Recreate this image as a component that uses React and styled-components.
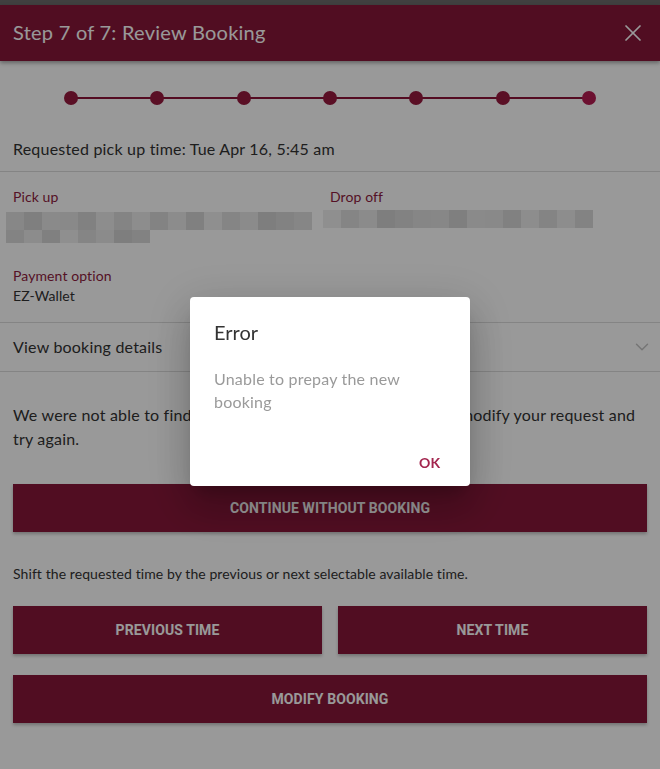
import React from "react";
import styled, { createGlobalStyle } from "styled-components";
import { X, ChevronDown } from "lucide-react";

const GlobalStyle = createGlobalStyle`
  html, body { margin: 0; padding: 0; background: #fff; }
  body { font-family: "Lato", "Open Sans", sans-serif; color: #333; }
  * { box-sizing: border-box; }
`;

const MAROON = "#871739";

const Page = styled.div`
  width: 660px;
  min-height: 769px;
  background: #fff;
  position: relative;
`;

const TopStrip = styled.div`
  height: 5px;
  background: #6b6b6b;
`;

const Header = styled.header`
  height: 56px;
  background: ${MAROON};
  display: flex;
  align-items: center;
  justify-content: space-between;
  padding: 0 13px;
  box-shadow: 0 2px 4px rgba(0, 0, 0, 0.35);
  color: #fff;
`;

const Title = styled.h1`
  margin: 0 0 2px;
  font-size: 20px;
  font-weight: 400;
  letter-spacing: 0.25px;
`;

const CloseBtn = styled.span`
  display: flex;
  color: #fff;
`;

const Stepper = styled.div`
  margin: 30px 64px 0;
  display: flex;
  justify-content: space-between;
  align-items: center;
  position: relative;
  &::before {
    content: "";
    position: absolute;
    left: 7px;
    right: 7px;
    top: 6px;
    height: 2px;
    background: #8d143a;
  }
`;

const Dot = styled.span`
  width: 14px;
  height: 14px;
  border-radius: 50%;
  background: ${(p) => (p.$active ? "#b41c50" : "#96193e")};
  position: relative;
`;

const Section = styled.div`
  padding: ${(p) => p.$pad || "0 13px"};
  border-bottom: ${(p) => (p.$divider ? "1px solid #dcdcdc" : "none")};
`;

const BodyText = styled.p`
  margin: 0;
  font-size: 16px;
  line-height: 24px;
  letter-spacing: 0.2px;
  color: #333;
`;

const Columns = styled.div`
  display: grid;
  grid-template-columns: 317px 317px;
`;

const Label = styled.div`
  font-size: 14px;
  line-height: 20px;
  letter-spacing: 0.1px;
  color: #8e1b40;
`;

const Value = styled.div`
  font-size: 14px;
  line-height: 20px;
  letter-spacing: 0.1px;
  color: #333;
`;

const Payment = styled.div`
  margin-top: 23px;
`;

const Mosaic = styled.div`
  margin-left: -7px;
  margin-top: ${(p) => p.$mt || "5px"};
  display: flex;
  flex-direction: column;
`;

const MosaicRow = styled.div`
  display: flex;
  height: ${(p) => p.$h}px;
`;

const Cell = styled.span`
  width: 18px;
  height: 100%;
  flex: none;
`;

const DetailsRow = styled.div`
  display: flex;
  align-items: center;
  justify-content: space-between;
  height: 49px;
  padding: 0 13px;
  border-bottom: 1px solid #dcdcdc;
`;

const Chevron = styled.span`
  display: flex;
  color: #c4c4c4;
  margin-right: -6px;
`;

const Button = styled.button`
  display: flex;
  align-items: center;
  justify-content: center;
  height: 48px;
  width: 100%;
  border: none;
  border-radius: 0;
  background: ${MAROON};
  color: #fff;
  font-family: "Roboto", sans-serif;
  font-weight: 700;
  font-size: 14px;
  letter-spacing: 0.1px;
  text-transform: uppercase;
  box-shadow: 0 2px 3px rgba(0, 0, 0, 0.25);
  cursor: pointer;
`;

const Actions = styled.div`
  padding: ${(p) => p.$pad || "0 13px"};
  display: grid;
  grid-template-columns: ${(p) => (p.$split ? "1fr 1fr" : "1fr")};
  gap: 16px;
`;

const SmallText = styled.p`
  margin: 0;
  padding: 32px 13px 0;
  font-size: 14px;
  line-height: 20px;
  color: #333;
  letter-spacing: 0.08px;
`;

const Overlay = styled.div`
  position: fixed;
  inset: 0;
  background: rgba(0, 0, 0, 0.4);
  display: flex;
  align-items: center;
  justify-content: center;
  padding-top: 14px;
`;

const Dialog = styled.div`
  width: 280px;
  background: #fff;
  border-radius: 4px;
  box-shadow: 0 11px 15px -7px rgba(0, 0, 0, 0.2), 0 24px 38px 3px rgba(0, 0, 0, 0.14),
    0 9px 46px 8px rgba(0, 0, 0, 0.12);
  display: flex;
  flex-direction: column;
`;

const DialogTitle = styled.h2`
  margin: 0;
  padding: 23px 24px 0;
  font-size: 20px;
  line-height: 24px;
  font-weight: 400;
  color: #333;
`;

const DialogBody = styled.p`
  margin: 0;
  padding: 23px 24px 0;
  font-size: 16px;
  line-height: 23px;
  letter-spacing: 0.2px;
  color: #9a9a9a;
`;

const DialogActions = styled.div`
  display: flex;
  justify-content: flex-end;
  padding: 31px 14px 6px;
`;

const TextButton = styled.button`
  height: 36px;
  padding: 0 16px;
  border: none;
  background: transparent;
  color: #a3264f;
  font-family: "Lato", sans-serif;
  font-weight: 700;
  font-size: 14px;
  text-transform: uppercase;
  cursor: pointer;
`;

const shades = [
  "#e6e6e6", "#ececec", "#dedede", "#e2e2e2", "#ebebeb", "#d6d6d6", "#d9d9d9",
  "#e4e4e4", "#dadada", "#e8e8e8", "#d4d4d4", "#dcdcdc", "#efefef", "#e0e0e0",
  "#d8d8d8", "#e9e9e9", "#d3d3d3",
];

function Blur({ rows, mt, seed = 0 }) {
  return (
    <Mosaic $mt={mt}>
      {rows.map((r, i) => (
        <MosaicRow key={i} $h={r.h}>
          {Array.from({ length: Math.round(r.w / 18) }).map((_, j) => (
            <Cell
              key={j}
              style={{ background: shades[(j * 7 + i * 5 + seed * 3) % shades.length] }}
            />
          ))}
        </MosaicRow>
      ))}
    </Mosaic>
  );
}

export default function App() {
  const dots = [0, 1, 2, 3, 4, 5, 6];
  return (
    <>
      <GlobalStyle />
      <Page>
        <TopStrip />
        <Header>
          <Title>Step 7 of 7: Review Booking</Title>
          <CloseBtn>
            <X size={28} strokeWidth={1.5} />
          </CloseBtn>
        </Header>
        <Stepper>
          {dots.map((d) => (
            <Dot key={d} $active={d === 6} />
          ))}
        </Stepper>
        <Section $pad="32px 13px 10px" $divider>
          <BodyText>Requested pick up time: Tue Apr 16, 5:45 am</BodyText>
        </Section>
        <Section $pad="15px 13px 16px" $divider>
          <Columns>
            <div>
              <Label>Pick up</Label>
              <Blur rows={[{ w: 299, h: 18 }, { w: 144, h: 13 }]} seed={1} />
            </div>
            <div>
              <Label>Drop off</Label>
              <Blur rows={[{ w: 270, h: 18 }]} mt="3px" seed={4} />
            </div>
          </Columns>
          <Payment>
            <Label>Payment option</Label>
            <Value>EZ-Wallet</Value>
          </Payment>
        </Section>
        <DetailsRow>
          <BodyText>View booking details</BodyText>
          <Chevron>
            <ChevronDown size={22} strokeWidth={1.6} />
          </Chevron>
        </DetailsRow>
        <Section $pad="31px 13px 33px">
          <BodyText>
            We were not able to find an available time for this trip. Please modify your request and
            try again.
          </BodyText>
        </Section>
        <Actions>
          <Button>Continue without booking</Button>
        </Actions>
        <SmallText>Shift the requested time by the previous or next selectable available time.</SmallText>
        <Actions $split $pad="22px 13px 0">
          <Button>Previous time</Button>
          <Button>Next time</Button>
        </Actions>
        <Actions $pad="21px 13px 0">
          <Button>Modify booking</Button>
        </Actions>
        <Overlay>
          <Dialog role="dialog">
            <DialogTitle>Error</DialogTitle>
            <DialogBody>Unable to prepay the new booking</DialogBody>
            <DialogActions>
              <TextButton>OK</TextButton>
            </DialogActions>
          </Dialog>
        </Overlay>
      </Page>
    </>
  );
}
